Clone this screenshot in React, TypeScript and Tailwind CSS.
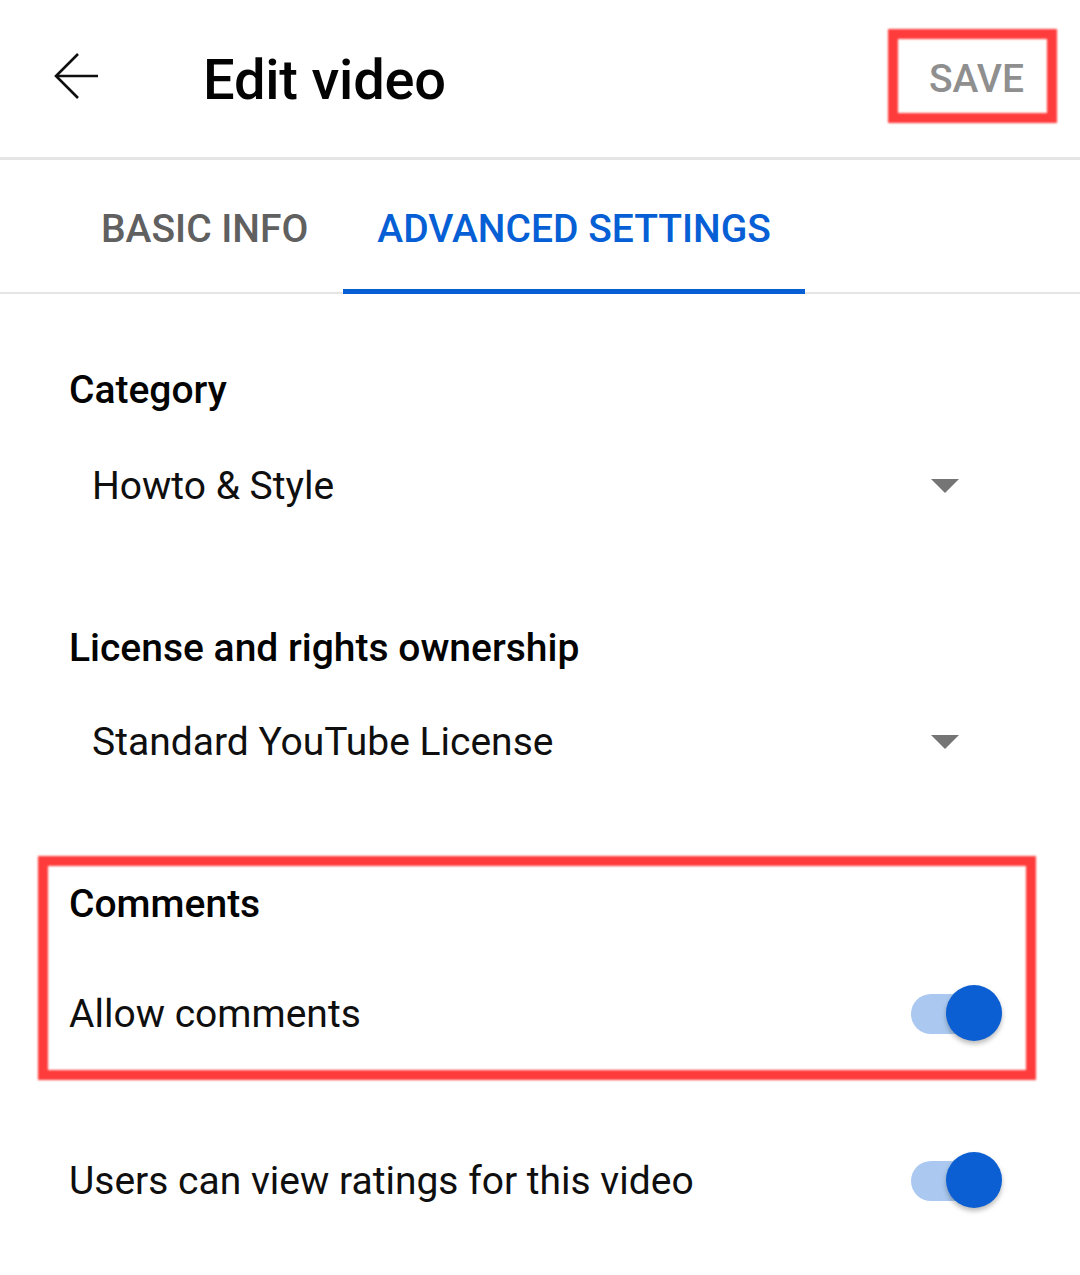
import { useState } from "react";

const font = { fontFamily: "Roboto, 'Noto Sans', sans-serif" };

function BackArrow() {
  return (
    <svg width="46" height="48" viewBox="0 0 46 48" fill="none" stroke="#0f0f0f" strokeWidth="2.6">
      <path d="M44 23H2" />
      <path d="M24 1L2 23L24 45" />
    </svg>
  );
}

function Caret() {
  return (
    <svg width="28" height="14" viewBox="0 0 28 14">
      <path d="M0 0H28L14 14Z" fill="#757575" />
    </svg>
  );
}

function Toggle({ on, onClick }: { on: boolean; onClick: () => void }) {
  return (
    <div onClick={onClick} className="relative w-[91px] h-[58px] cursor-pointer">
      <div className={"absolute left-0 top-[9px] w-[84px] h-[40px] rounded-full " + (on ? "bg-[#abc9f0]" : "bg-[#c4c4c4]")}></div>
      <div
        className={
          "absolute top-0 w-[56px] h-[56px] rounded-full shadow-[0_3px_5px_rgba(0,0,0,0.28)] " +
          (on ? "right-0 bg-[#0b5fd2]" : "left-0 bg-[#f1f1f1]")
        }
      ></div>
    </div>
  );
}

export default function App() {
  const [allowComments, setAllowComments] = useState(true);
  const [showRatings, setShowRatings] = useState(true);

  return (
    <div style={font} className="w-[1080px] h-[1275px] bg-white overflow-hidden text-[#0f0f0f]">
      {/* header */}
      <div className="h-[160px] border-b-[3px] border-[#e5e5e5] flex items-center pl-[54px] pr-[23px]">
        <div className="mb-[4px]"><BackArrow /></div>
        <div className="ml-[103px] text-[56px] font-medium text-[#030303] tracking-[-0.2px] mt-[2px]">Edit video</div>
        <div className="ml-auto relative w-[169px] h-[94px] flex items-center justify-center mb-[6px]">
          <span className="text-[39px] font-medium text-[#8f8f8f] ml-[8px] mt-[8px]">SAVE</span>
          <div className="absolute inset-0 border-[10px] border-[#ff2626] opacity-90 blur-[1px]"></div>
        </div>
      </div>

      {/* tabs */}
      <div className="h-[134px] border-b-2 border-[#e5e5e5] flex pl-[66px]">
        <div className="h-[134px] px-[35px] pt-[10px] flex items-center border-b-[5px] border-transparent text-[39px] font-medium text-[#606060]">
          BASIC INFO
        </div>
        <div className="h-[134px] px-[34px] pt-[10px] flex items-center border-b-[5px] border-[#065fd4] text-[39px] font-medium text-[#065fd4]">
          ADVANCED SETTINGS
        </div>
      </div>

      {/* content */}
      <div className="px-[69px]">
        <div className="mt-[72px] h-[48px] flex items-center text-[39px] font-medium text-[#030303]">Category</div>
        <div className="mt-[48px] h-[48px] flex items-center pl-[23px] pr-[52px] text-[39px]">
          <span>Howto &amp; Style</span>
          <div className="ml-auto"><Caret /></div>
        </div>

        <div className="mt-[114px] h-[48px] flex items-center text-[39px] font-medium text-[#030303]">License and rights ownership</div>
        <div className="mt-[46px] h-[48px] flex items-center pl-[23px] pr-[52px] text-[39px]">
          <span>Standard YouTube License</span>
          <div className="ml-auto"><Caret /></div>
        </div>

        <div className="relative mt-[90px] -mx-[31px] px-[31px] pt-[24px] pb-[18px]">
          <div className="h-[48px] flex items-center text-[39px] font-medium text-[#030303]">Comments</div>
          <div className="mt-[57px] h-[58px] flex items-center pr-[9px] text-[39px]">
            <span>Allow comments</span>
            <div className="ml-auto"><Toggle on={allowComments} onClick={() => setAllowComments(!allowComments)} /></div>
          </div>
          <div className="absolute left-0 top-0 w-[998px] h-[224px] border-[10px] border-[#ff2626] opacity-90 blur-[1px]"></div>
        </div>

        <div className="mt-[91px] h-[58px] flex items-center pr-[9px] text-[39px]">
          <span>Users can view ratings for this video</span>
          <div className="ml-auto"><Toggle on={showRatings} onClick={() => setShowRatings(!showRatings)} /></div>
        </div>
      </div>
    </div>
  );
}
